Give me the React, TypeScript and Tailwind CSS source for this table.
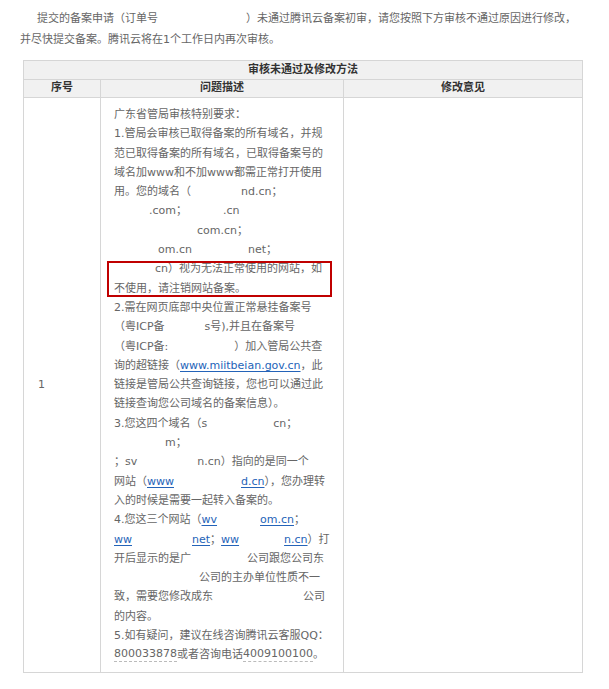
type Seg = string | { gap: number } | { link: string } | { dash: string };

const intro: Seg[][] = [
  [{ gap: 17 }, "提交的备案申请（订单号", { gap: 88 }, "）未通过腾讯云备案初审，请您按照下方审核不通过原因进行修改，"],
  ["并尽快提交备案。腾讯云将在1个工作日内再次审核。"],
];

const before: Seg[][] = [
  ["广东省管局审核特别要求："],
  ["1.管局会审核已取得备案的所有域名，并规"],
  ["范已取得备案的所有域名，已取得备案号的"],
  ["域名加www和不加www都需正常打开使用"],
  ["用。您的域名（", { gap: 50 }, "nd.cn；"],
  [{ gap: 35 }, ".com；", { gap: 36 }, ".cn"],
  [{ gap: 83 }, "com.cn；"],
  [{ gap: 44 }, "om.cn", { gap: 56 }, "net；"],
];

const boxed: Seg[][] = [
  [{ gap: 41 }, "cn）视为无法正常使用的网站，如"],
  ["不使用，请注销网站备案。"],
];

const after: Seg[][] = [
  ["2.需在网页底部中央位置正常悬挂备案号"],
  ["（粤ICP备", { gap: 40 }, "s号),并且在备案号"],
  ["（粤ICP备:", { gap: 66 }, "）加入管局公共查"],
  ["询的超链接（", { link: "www.miitbeian.gov.cn" }, "，此"],
  ["链接是管局公共查询链接，您也可以通过此"],
  ["链接查询您公司域名的备案信息）。"],
  ["3.您这四个域名（s", { gap: 66 }, "cn；"],
  [{ gap: 51 }, "m；"],
  ["；sv", { gap: 60 }, "n.cn）指向的是同一个"],
  ["网站（", { link: "www" }, { gap: 67 }, { link: "d.cn" }, "），您办理转"],
  ["入的时候是需要一起转入备案的。"],
  ["4.您这三个网站（", { link: "wv" }, { gap: 43 }, { link: "om.cn" }, "；"],
  [{ link: "ww" }, { gap: 60 }, { link: "net" }, "；", { link: "ww" }, { gap: 45 }, { link: "n.cn" }, "）打"],
  ["开后显示的是广", { gap: 56 }, "公司跟您公司东"],
  [{ gap: 85 }, "公司的主办单位性质不一"],
  ["致，需要您修改成东", { gap: 90 }, "公司"],
  ["的内容。"],
  ["5.如有疑问，建议在线咨询腾讯云客服QQ："],
  [{ dash: "800033878" }, "或者咨询电话", { dash: "4009100100" }, "。"],
];

function Line({ segs, h = "h-[19.3px] leading-[19.3px]" }: { segs: Seg[]; h?: string }) {
  return (
    <div className={`flex items-center whitespace-nowrap ${h}`}>
      {segs.map((s, i) => {
        if (typeof s === "string") return <span key={i}>{s}</span>;
        if ("gap" in s) return <span key={i} className="inline-block shrink-0" style={{ width: s.gap }} />;
        if ("link" in s)
          return (
            <span key={i} className="text-[#2463b8] underline underline-offset-2">
              {s.link}
            </span>
          );
        return (
          <span key={i} className="border-b border-dashed border-[#bbb] leading-[14px]">
            {s.dash}
          </span>
        );
      })}
    </div>
  );
}

export default function App() {
  return (
    <div className="min-h-screen bg-white font-['DejaVu_Sans','Noto_Sans_CJK_SC',sans-serif] text-[11px] text-[#666]">
      <div className="px-[20px] pt-[8px]">
        {intro.map((l, i) => (
          <Line key={i} segs={l} h="h-[21px] leading-[21px]" />
        ))}
      </div>

      <table className="mt-[10px] ml-[23px] w-[560px] table-fixed border-collapse border border-[#d6d6d6]">
        <colgroup>
          <col className="w-[77px]" />
          <col className="w-[243px]" />
          <col />
        </colgroup>
        <thead className="bg-[#f1f1f1] font-bold text-[#333]">
          <tr>
            <th colSpan={3} className="h-[19px] border border-[#d6d6d6] p-0 text-center">
              审核未通过及修改方法
            </th>
          </tr>
          <tr>
            <th className="h-[18px] border border-[#d6d6d6] p-0 text-center">序号</th>
            <th className="h-[18px] border border-[#d6d6d6] p-0 text-center">问题描述</th>
            <th className="h-[18px] border border-[#d6d6d6] p-0 text-center">修改意见</th>
          </tr>
        </thead>
        <tbody>
          <tr>
            <td className="border border-[#d6d6d6] pl-[14px] align-middle">1</td>
            <td className="border border-[#d6d6d6] pt-[7px] pb-[7px] pl-[13px] align-top">
              {before.map((l, i) => (
                <Line key={i} segs={l} />
              ))}
              <div className="relative">
                {boxed.map((l, i) => (
                  <Line key={i} segs={l} />
                ))}
                <div className="pointer-events-none absolute top-[2px] -left-[7px] h-[36px] w-[225px] border-2 border-[#c00000]" />
              </div>
              {after.map((l, i) => (
                <Line key={i} segs={l} />
              ))}
            </td>
            <td className="border border-[#d6d6d6]" />
          </tr>
        </tbody>
      </table>
    </div>
  );
}
